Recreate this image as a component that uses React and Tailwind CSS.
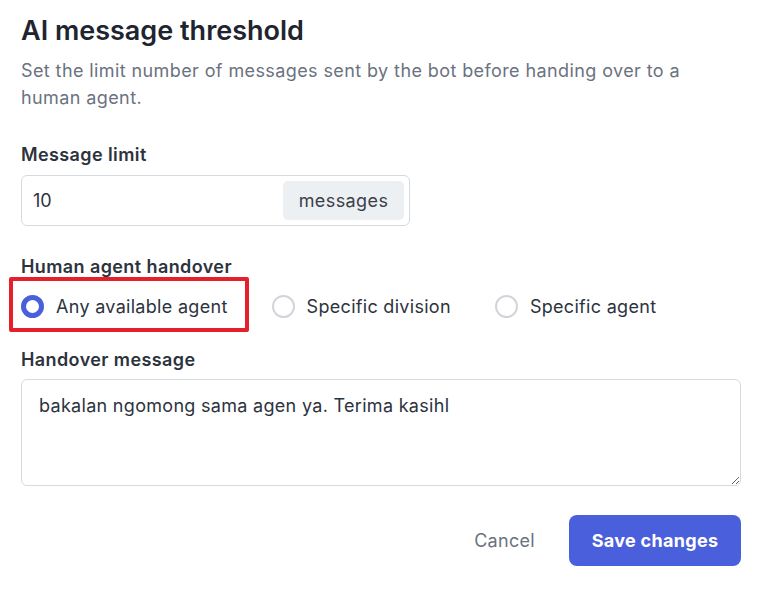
import { useState } from 'react'

const options = [
  { id: 'any', label: 'Any available agent' },
  { id: 'division', label: 'Specific division' },
  { id: 'agent', label: 'Specific agent' },
]

function Radio({ checked, label }) {
  return (
    <label className="flex items-center gap-[12px] cursor-pointer">
      <span
        className={`w-[23px] h-[23px] rounded-full bg-white shrink-0 ${
          checked ? 'border-[5px] border-[#4a5fdc]' : 'border-2 border-[#d1d5db]'
        }`}
      />
      <span className="text-[18px] text-[#2d333d] tracking-[0.3px]">{label}</span>
    </label>
  )
}

export default function App() {
  const [handover, setHandover] = useState('any')
  const [limit, setLimit] = useState('10')
  const [message, setMessage] = useState('bakalan ngomong sama agen ya. Terima kasihl')

  return (
    <div className="min-h-[593px] bg-white font-['Inter',sans-serif] pl-[21px] pr-[40px] pt-[13px]">
      <h1 className="text-[27px] leading-[36px] font-semibold text-[#1f2530]">AI message threshold</h1>
      <p className="mt-[8px] text-[18px] leading-[27px] text-[#6b7280] tracking-[0.4px] w-[700px]">
        Set the limit number of messages sent by the bot before handing over to a human agent.
      </p>

      <div className="mt-[32px]">
        <div className="text-[18px] leading-[24px] font-semibold text-[#2d333d] tracking-[0.4px]">Message limit</div>
        <div className="mt-[8px] w-[389px] h-[51px] border border-[#d5d9e0] rounded-[6px] flex items-center pl-[11px] pr-[5px]">
          <input
            value={limit}
            onChange={(e) => setLimit(e.target.value)}
            className="flex-1 min-w-0 outline-none text-[18px] text-[#2d333d] bg-transparent"
          />
          <span className="h-[39px] w-[121px] bg-[#edf0f3] rounded-[5px] flex items-center justify-center text-[18px] text-[#3a404a] tracking-[0.4px]">
            messages
          </span>
        </div>
      </div>

      <div className="mt-[29px]">
        <div className="text-[18px] leading-[24px] font-semibold text-[#2d333d] tracking-[0.4px]">Human agent handover</div>
        <div className="relative mt-[15px] flex items-center h-[24px]">
          <div className="absolute left-[-12px] top-[-17px] w-[240px] h-[55px] border-[4px] border-[#e5202b] rounded-[2px] pointer-events-none" />
          <div className="flex items-center gap-[44px]">
            {options.map((o) => (
              <div key={o.id} onClick={() => setHandover(o.id)}>
                <Radio checked={handover === o.id} label={o.label} />
              </div>
            ))}
          </div>
        </div>
      </div>

      <div className="mt-[30px]">
        <div className="text-[18px] leading-[24px] font-semibold text-[#2d333d] tracking-[0.4px]">Handover message</div>
        <textarea
          value={message}
          onChange={(e) => setMessage(e.target.value)}
          className="mt-[7px] block w-[720px] h-[107px] border border-[#d5d9e0] rounded-[6px] px-[17px] py-[13px] text-[18px] leading-[26px] text-[#2d333d] tracking-[0.3px] outline-none"
        />
      </div>

      <div className="mt-[29px] w-[720px] flex justify-end items-center gap-[34px]">
        <button className="text-[18px] text-[#6b7280] tracking-[0.3px]">Cancel</button>
        <button className="h-[51px] w-[172px] rounded-[8px] bg-[#4a5fdc] text-white text-[18px] font-bold tracking-[0.3px]">
          Save changes
        </button>
      </div>
    </div>
  )
}
